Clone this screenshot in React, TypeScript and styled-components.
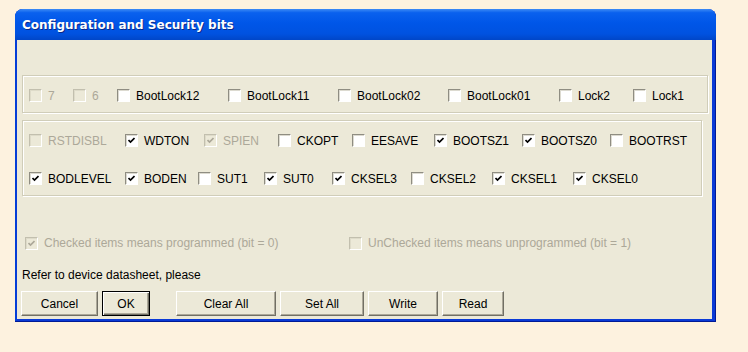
import React from "react";
import styled, {createGlobalStyle} from "styled-components";

const GlobalStyle = createGlobalStyle`
    html, body {
        margin: 0;
        padding: 0;
        background: #fdf2df;
        font-family: "Liberation Sans", Arial, sans-serif;
    }
`;

const Page = styled.div`
    width: 748px;
    height: 352px;
    padding: 9px 0 0 15px;
    box-sizing: border-box;
`;

const Window = styled.div`
    width: 701px;
    height: 313px;
    display: flex;
    flex-direction: column;
    background: #0a3ad6;
    border-radius: 8px 8px 0 0;
    box-shadow: inset -1px -1px 0 #001a96, inset 1px 0 0 #0040d8;
    padding: 0 4px 3px 2px;
    box-sizing: border-box;
`;

const TitleBar = styled.div`
    height: 31px;
    display: flex;
    align-items: center;
    margin: 0 -4px 0 -2px;
    padding: 1px 0 0 7px;
    box-sizing: border-box;
    border-radius: 8px 8px 0 0;
    background: linear-gradient(to bottom, #3d8bf5 0%, #0a61ee 12%, #0056e8 45%, #0052e0 80%, #0046c8 100%);
    color: #fff;
    font-family: "DejaVu Sans", Verdana, sans-serif;
    font-weight: bold;
    font-size: 12px;
    text-shadow: 1px 1px 0 #0a2a8a;
`;

const Client = styled.div`
    flex: 1;
    background: #ece9d8;
    display: flex;
    flex-direction: column;
    padding: 35px 0 3px 5px;
    box-sizing: border-box;
    font-size: 12px;
    color: #000;
`;

const Group = styled.div<{ $w: number; $h: number }>`
    width: ${(p) => p.$w}px;
    height: ${(p) => p.$h}px;
    box-sizing: border-box;
    border: 1px solid #d0cdb9;
    box-shadow: inset 1px 1px 0 #fff, 1px 1px 0 #fff;
    display: flex;
    flex-direction: column;
    justify-content: center;
    gap: 22px;
    padding: 3px 0 0 6px;
`;

const Row = styled.div`
    display: flex;
    align-items: center;
    height: 16px;
`;

const Item = styled.label<{ $w?: number; $off?: boolean }>`
    display: flex;
    align-items: center;
    gap: 6px;
    flex: none;
    width: ${(p) => (p.$w ? `${p.$w}px` : "auto")};
    color: ${(p) => (p.$off ? "#aca899" : "#000")};
    white-space: nowrap;
`;

const Box = styled.span<{ $off?: boolean }>`
    width: 13px;
    height: 13px;
    box-sizing: border-box;
    flex: none;
    display: flex;
    align-items: center;
    justify-content: center;
    background: ${(p) => (p.$off ? "#ece9d8" : "#fff")};
    border: 1px solid;
    border-color: ${(p) => (p.$off ? "#c2bfae #fff #fff #c2bfae" : "#8f8d82 #fff #fff #8f8d82")};
    box-shadow: ${(p) => (p.$off ? "inset 1px 1px 0 #dedbc9" : "inset 1px 1px 0 #dcdad0")};
`;

const Legend = styled.div`
    display: flex;
    align-items: center;
    height: 16px;
    margin-top: 39px;
    padding-left: 3px;
`;

const Note = styled.div`
    margin-top: 17px;
    height: 14px;
    line-height: 14px;
`;

const ButtonBar = styled.div`
    display: flex;
    gap: 4px;
    margin-top: auto;
    margin-left: -1px;
`;

const Button = styled.button<{ $w: number; $def?: boolean; $gapAfter?: number }>`
    width: ${(p) => p.$w}px;
    height: 25px;
    margin-right: ${(p) => p.$gapAfter ?? 0}px;
    font-family: "Liberation Sans", Arial, sans-serif;
    font-size: 12px;
    color: #000;
    background: #ece9d8;
    padding: 0;
    border: 1px solid;
    border-color: ${(p) => (p.$def ? "#000" : "#fff #716f64 #716f64 #fff")};
    box-shadow: ${(p) =>
        p.$def
            ? "inset 1px 1px 0 #fff, inset -1px -1px 0 #716f64, inset -2px -2px 0 #aca899"
            : "inset -1px -1px 0 #aca899"};
`;

type Bit = { name: string; w?: number; on?: boolean; off?: boolean };

const row1: Bit[] = [
    {name: "7", w: 44, off: true},
    {name: "6", w: 44, off: true},
    {name: "BootLock12", w: 111},
    {name: "BootLock11", w: 110},
    {name: "BootLock02", w: 110},
    {name: "BootLock01", w: 111},
    {name: "Lock2", w: 74},
    {name: "Lock1"},
];

const row2: Bit[] = [
    {name: "RSTDISBL", w: 96, off: true},
    {name: "WDTON", w: 79, on: true},
    {name: "SPIEN", w: 74, on: true, off: true},
    {name: "CKOPT", w: 74},
    {name: "EESAVE", w: 82},
    {name: "BOOTSZ1", w: 88, on: true},
    {name: "BOOTSZ0", w: 88, on: true},
    {name: "BOOTRST"},
];

const row3: Bit[] = [
    {name: "BODLEVEL", w: 96, on: true},
    {name: "BODEN", w: 73, on: true},
    {name: "SUT1", w: 66},
    {name: "SUT0", w: 68, on: true},
    {name: "CKSEL3", w: 79, on: true},
    {name: "CKSEL2", w: 81},
    {name: "CKSEL1", w: 81, on: true},
    {name: "CKSEL0", on: true},
];

function Check({on, off}: { on?: boolean; off?: boolean }) {
    return (
        <Box $off={off}>
            {on && (
                <svg width="7" height="7" viewBox="0 0 7 7">
                    <path d="M0.5 3 L2.5 5 L6.5 1" fill="none" stroke={off ? "#aca899" : "#000"} strokeWidth="1.7" />
                </svg>
            )}
        </Box>
    );
}

function BitRow({bits}: { bits: Bit[] }) {
    return (
        <Row>
            {bits.map((b) => (
                <Item key={b.name} $w={b.w} $off={b.off}>
                    <Check on={b.on} off={b.off} />
                    {b.name}
                </Item>
            ))}
        </Row>
    );
}

export default function App() {
    return (
        <Page>
            <GlobalStyle />
            <Window>
                <TitleBar>Configuration and Security bits</TitleBar>
                <Client>
                    <Group $w={686} $h={38}>
                        <BitRow bits={row1} />
                    </Group>
                    <div style={{height: 7}} />
                    <Group $w={680} $h={76}>
                        <BitRow bits={row2} />
                        <BitRow bits={row3} />
                    </Group>
                    <Legend>
                        <Item $w={324} $off>
                            <Check on off />
                            Checked items means programmed (bit = 0)
                        </Item>
                        <Item $off>
                            <Check off />
                            UnChecked items means unprogrammed (bit = 1)
                        </Item>
                    </Legend>
                    <Note>Refer to device datasheet, please</Note>
                    <ButtonBar>
                        <Button $w={77}>Cancel</Button>
                        <Button $w={48} $def $gapAfter={22}>OK</Button>
                        <Button $w={100}>Clear All</Button>
                        <Button $w={84}>Set All</Button>
                        <Button $w={70}>Write</Button>
                        <Button $w={62}>Read</Button>
                    </ButtonBar>
                </Client>
            </Window>
        </Page>
    );
}
